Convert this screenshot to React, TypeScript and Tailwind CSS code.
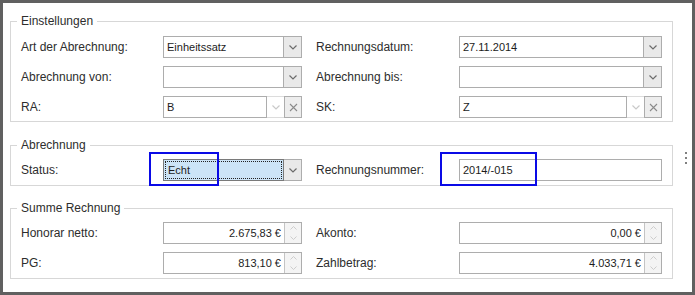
import type { ReactNode } from "react";

const LABEL = "font-['Liberation_Sans',Arial,sans-serif] text-[12px] text-[#2d2d2d]";
const VALUE = "font-['Liberation_Sans',Arial,sans-serif] text-[11px] text-[#1c1c1c]";

function Chevron({ light }: { light?: boolean }) {
  return (
    <svg width="8" height="5" viewBox="0 0 8 5">
      <path d="M0.5 0.5 L4 4 L7.5 0.5" fill="none" stroke={light ? "#c9c9c9" : "#6b6b6b"} strokeWidth="1.2" />
    </svg>
  );
}

function Cross() {
  return (
    <svg width="9" height="9" viewBox="0 0 9 9">
      <path d="M1 1 L8 8 M8 1 L1 8" fill="none" stroke="#8a8a8a" strokeWidth="1.1" />
    </svg>
  );
}

function Spinner() {
  return (
    <div className="w-[17px] h-full border-l border-[#c4c4c4] bg-[#f4f4f4] flex flex-col">
      <div className="flex-1 flex items-center justify-center">
        <svg width="7" height="4" viewBox="0 0 7 4">
          <path d="M0.5 3.5 L3.5 0.5 L6.5 3.5" fill="none" stroke="#cdcdcd" strokeWidth="1" />
        </svg>
      </div>
      <div className="flex-1 flex items-center justify-center">
        <svg width="7" height="4" viewBox="0 0 7 4">
          <path d="M0.5 0.5 L3.5 3.5 L6.5 0.5" fill="none" stroke="#cdcdcd" strokeWidth="1" />
        </svg>
      </div>
    </div>
  );
}

function Combo({ value, w, clear, focus }: { value?: string; w: string; clear?: boolean; focus?: boolean }) {
  return (
    <div className={`${w} h-[22px] flex`}>
      <div
        className={`flex-1 flex items-center border ${
          focus ? "border-[#7a7a7a] bg-[#cce4f7] p-px" : "border-[#adadad] bg-white"
        }`}
      >
        <div
          className={`w-full h-full flex items-center pl-[2px] ${VALUE} ${
            focus ? "border border-dotted border-[#222]" : "pl-[3px]"
          }`}
        >
          {value}
        </div>
      </div>
      {clear ? (
        <>
          <div className="w-[17px] flex items-center justify-center border-y border-[#dcdcdc] bg-white">
            <Chevron light />
          </div>
          <div className="w-[18px] flex items-center justify-center border border-[#adadad] bg-[#ededed]">
            <Cross />
          </div>
        </>
      ) : (
        <div className="w-[18px] flex items-center justify-center border border-l-0 border-[#adadad] bg-[#e9e9e9]">
          <Chevron />
        </div>
      )}
    </div>
  );
}

function Text({ value, w }: { value: string; w: string }) {
  return (
    <div className={`${w} h-[22px] flex items-center border border-[#adadad] bg-white pl-[3px] ${VALUE}`}>
      {value}
    </div>
  );
}

function Money({ value, w }: { value: string; w: string }) {
  return (
    <div className={`${w} h-[22px] flex border border-[#adadad] bg-white`}>
      <div className={`flex-1 flex items-center justify-end pr-[3px] ${VALUE}`}>{value}</div>
      <Spinner />
    </div>
  );
}

function Row({ l1, c1, l2, c2 }: { l1: string; c1: ReactNode; l2: string; c2: ReactNode }) {
  return (
    <div className="flex items-center h-[22px] ml-[4px]">
      <div className={`w-[142px] ${LABEL}`}>{l1}</div>
      {c1}
      <div className="w-[14px]" />
      <div className={`w-[143px] ${LABEL}`}>{l2}</div>
      {c2}
    </div>
  );
}

function Group({ title, className, children }: { title: string; className: string; children: ReactNode }) {
  return (
    <fieldset className={`w-[663px] ml-[7px] border border-[#d7d7d7] pl-[6px] pr-[9px] ${className}`}>
      <legend className={`px-[4px] leading-[16px] ${LABEL}`}>{title}</legend>
      {children}
    </fieldset>
  );
}

export default function App() {
  return (
    <div className="relative w-[695px] h-[295px] bg-white border-[3px] border-[#606060] pt-[10px]">
      <Group title="Einstellungen" className="pt-[7px] pb-[3px] flex flex-col gap-[8px]">
        <Row
          l1="Art der Abrechnung:"
          c1={<Combo w="w-[139px]" value="Einheitssatz" />}
          l2="Rechnungsdatum:"
          c2={<Combo w="w-[203px]" value="27.11.2014" />}
        />
        <Row
          l1="Abrechnung von:"
          c1={<Combo w="w-[139px]" />}
          l2="Abrechnung bis:"
          c2={<Combo w="w-[203px]" />}
        />
        <Row
          l1="RA:"
          c1={<Combo w="w-[139px]" value="B" clear />}
          l2="SK:"
          c2={<Combo w="w-[203px]" value="Z" clear />}
        />
      </Group>

      <Group title="Abrechnung" className="mt-[15px] pt-[6px] pb-[4px]">
        <Row
          l1="Status:"
          c1={<Combo w="w-[139px]" value="Echt" focus />}
          l2="Rechnungsnummer:"
          c2={<Text w="w-[203px]" value="2014/-015" />}
        />
      </Group>

      <Group title="Summe Rechnung" className="mt-[14px] pt-[6px] pb-[4px] flex flex-col gap-[8px]">
        <Row
          l1="Honorar netto:"
          c1={<Money w="w-[139px]" value="2.675,83 €" />}
          l2="Akonto:"
          c2={<Money w="w-[203px]" value="0,00 €" />}
        />
        <Row
          l1="PG:"
          c1={<Money w="w-[139px]" value="813,10 €" />}
          l2="Zahlbetrag:"
          c2={<Money w="w-[203px]" value="4.033,71 €" />}
        />
      </Group>

      {/* annotation frames */}
      <div className="absolute left-[146px] top-[149px] w-[70px] h-[34px] border-2 border-[#0a0ae6]" />
      <div className="absolute left-[437px] top-[149px] w-[97px] h-[34px] border-2 border-[#0a0ae6]" />

      {/* splitter grip */}
      <div className="absolute left-[682px] top-[149px] flex flex-col gap-[3px]">
        <div className="w-[2px] h-[2px] bg-[#808080]" />
        <div className="w-[2px] h-[2px] bg-[#808080]" />
        <div className="w-[2px] h-[2px] bg-[#808080]" />
      </div>
    </div>
  );
}
